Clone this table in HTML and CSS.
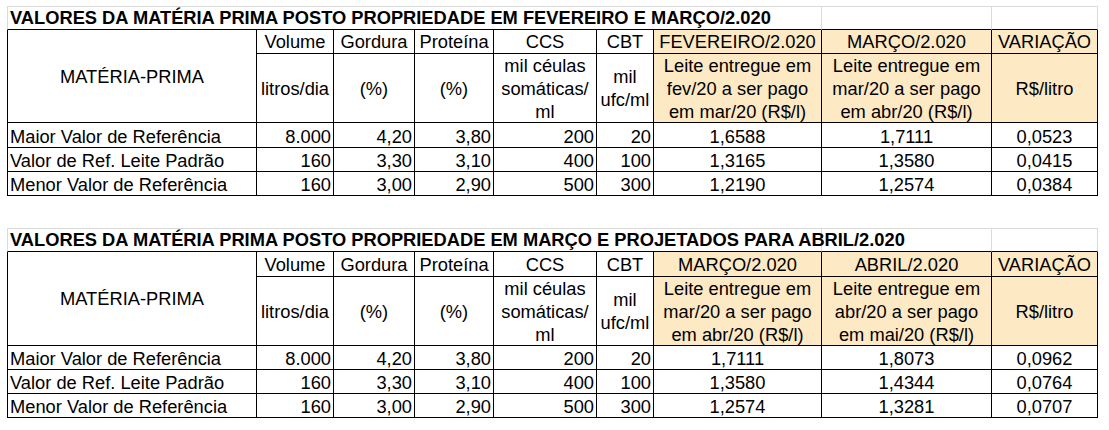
FILE: index.html
```html
<!DOCTYPE html>
<html lang="pt-BR">
<head>
<meta charset="utf-8">
<title>Valores da matéria prima</title>
<link rel="stylesheet" href="styles.css">
</head>
<body>
<div class="sheet">
  <div class="grid">
    <div class="c title">VALORES DA MATÉRIA PRIMA POSTO PROPRIEDADE EM FEVEREIRO E MARÇO/2.020</div>
    <div class="c tgrid"></div>
    <div class="c tgrid tlast"></div>

    <div class="c hd first mp">MATÉRIA-PRIMA</div>
    <div class="c hd">Volume</div>
    <div class="c hd">Gordura</div>
    <div class="c hd">Proteína</div>
    <div class="c hd">CCS</div>
    <div class="c hd">CBT</div>
    <div class="c hd beige">FEVEREIRO/2.020</div>
    <div class="c hd beige">MARÇO/2.020</div>
    <div class="c hd beige">VARIAÇÃO</div>

    <div class="c hd">litros/dia</div>
    <div class="c hd">(%)</div>
    <div class="c hd">(%)</div>
    <div class="c hd">mil céulas<br>somáticas/<br>ml</div>
    <div class="c hd">mil<br>ufc/ml</div>
    <div class="c hd beige">Leite entregue em<br>fev/20 a ser pago<br>em mar/20 (R$/l)</div>
    <div class="c hd beige">Leite entregue em<br>mar/20 a ser pago<br>em abr/20 (R$/l)</div>
    <div class="c hd beige">R$/litro</div>

    <div class="c first lbl">Maior Valor de Referência</div>
    <div class="c num">8.000</div>
    <div class="c num">4,20</div>
    <div class="c num">3,80</div>
    <div class="c num">200</div>
    <div class="c num">20</div>
    <div class="c ctr">1,6588</div>
    <div class="c ctr">1,7111</div>
    <div class="c ctr">0,0523</div>

    <div class="c first lbl">Valor de Ref. Leite Padrão</div>
    <div class="c num">160</div>
    <div class="c num">3,30</div>
    <div class="c num">3,10</div>
    <div class="c num">400</div>
    <div class="c num">100</div>
    <div class="c ctr">1,3165</div>
    <div class="c ctr">1,3580</div>
    <div class="c ctr">0,0415</div>

    <div class="c first lbl">Menor Valor de Referência</div>
    <div class="c num">160</div>
    <div class="c num">3,00</div>
    <div class="c num">2,90</div>
    <div class="c num">500</div>
    <div class="c num">300</div>
    <div class="c ctr">1,2190</div>
    <div class="c ctr">1,2574</div>
    <div class="c ctr">0,0384</div>
  </div>

  <div class="grid second">
    <div class="c title">VALORES DA MATÉRIA PRIMA POSTO PROPRIEDADE EM MARÇO E PROJETADOS PARA ABRIL/2.020</div>
    <div class="c tgrid"></div>
    <div class="c tgrid tlast"></div>

    <div class="c hd first mp">MATÉRIA-PRIMA</div>
    <div class="c hd">Volume</div>
    <div class="c hd">Gordura</div>
    <div class="c hd">Proteína</div>
    <div class="c hd">CCS</div>
    <div class="c hd">CBT</div>
    <div class="c hd beige">MARÇO/2.020</div>
    <div class="c hd beige">ABRIL/2.020</div>
    <div class="c hd beige">VARIAÇÃO</div>

    <div class="c hd">litros/dia</div>
    <div class="c hd">(%)</div>
    <div class="c hd">(%)</div>
    <div class="c hd">mil céulas<br>somáticas/<br>ml</div>
    <div class="c hd">mil<br>ufc/ml</div>
    <div class="c hd beige">Leite entregue em<br>mar/20 a ser pago<br>em abr/20 (R$/l)</div>
    <div class="c hd beige">Leite entregue em<br>abr/20 a ser pago<br>em mai/20 (R$/l)</div>
    <div class="c hd beige">R$/litro</div>

    <div class="c first lbl">Maior Valor de Referência</div>
    <div class="c num">8.000</div>
    <div class="c num">4,20</div>
    <div class="c num">3,80</div>
    <div class="c num">200</div>
    <div class="c num">20</div>
    <div class="c ctr">1,7111</div>
    <div class="c ctr">1,8073</div>
    <div class="c ctr">0,0962</div>

    <div class="c first lbl">Valor de Ref. Leite Padrão</div>
    <div class="c num">160</div>
    <div class="c num">3,30</div>
    <div class="c num">3,10</div>
    <div class="c num">400</div>
    <div class="c num">100</div>
    <div class="c ctr">1,3580</div>
    <div class="c ctr">1,4344</div>
    <div class="c ctr">0,0764</div>

    <div class="c first lbl">Menor Valor de Referência</div>
    <div class="c num">160</div>
    <div class="c num">3,00</div>
    <div class="c num">2,90</div>
    <div class="c num">500</div>
    <div class="c num">300</div>
    <div class="c ctr">1,2574</div>
    <div class="c ctr">1,3281</div>
    <div class="c ctr">0,0707</div>
  </div>
</div>
</body>
</html>
```

FILE: styles.css
```css
html, body {
  margin: 0;
  padding: 0;
  background: #ffffff;
}
body {
  font-family: "Liberation Sans", Arial, sans-serif;
  font-size: 18.3px;
  color: #000;
}
.sheet {
  padding: 6px 0 0 7px;
}
.grid {
  display: grid;
  grid-template-columns: 250px 77px 81px 79px 103px 57px 168px 170px 106px;
  grid-template-rows: 24px 24px 69px 25px 24px 24px;
  width: 1091px;
}
.grid.second {
  margin-top: 32px;
  grid-template-rows: 24px 25px 69px 24px 24px 24px;
}
.c {
  box-sizing: border-box;
  border-right: 1px solid #000;
  border-bottom: 1px solid #000;
  display: flex;
  align-items: center;
  white-space: nowrap;
  overflow: visible;
  line-height: 23px;
}
.first {
  border-left: 1px solid #000;
}
.title {
  grid-column: 1 / 8;
  font-weight: bold;
  border-top: 1px solid #dadada;
  border-left: 1px solid #dadada;
  border-right: 1px solid #dadada;
  align-items: flex-end;
  padding: 0 0 1px 2px;
  line-height: 20px;
}
.tgrid {
  border-top: 1px solid #dadada;
  border-right: 1px solid #dadada;
}
.tlast {
  border-right: 1px solid #dadada;
}
.hd {
  justify-content: center;
  text-align: center;
}
.mp {
  grid-row: 2 / 4;
  grid-column: 1;
}
.beige {
  background: #fde9c4;
}
.lbl {
  padding: 2px 0 0 2px;
}
.num {
  justify-content: flex-end;
  padding: 2px 2px 0 0;
}
.ctr {
  justify-content: center;
  padding-top: 2px;
}
```
